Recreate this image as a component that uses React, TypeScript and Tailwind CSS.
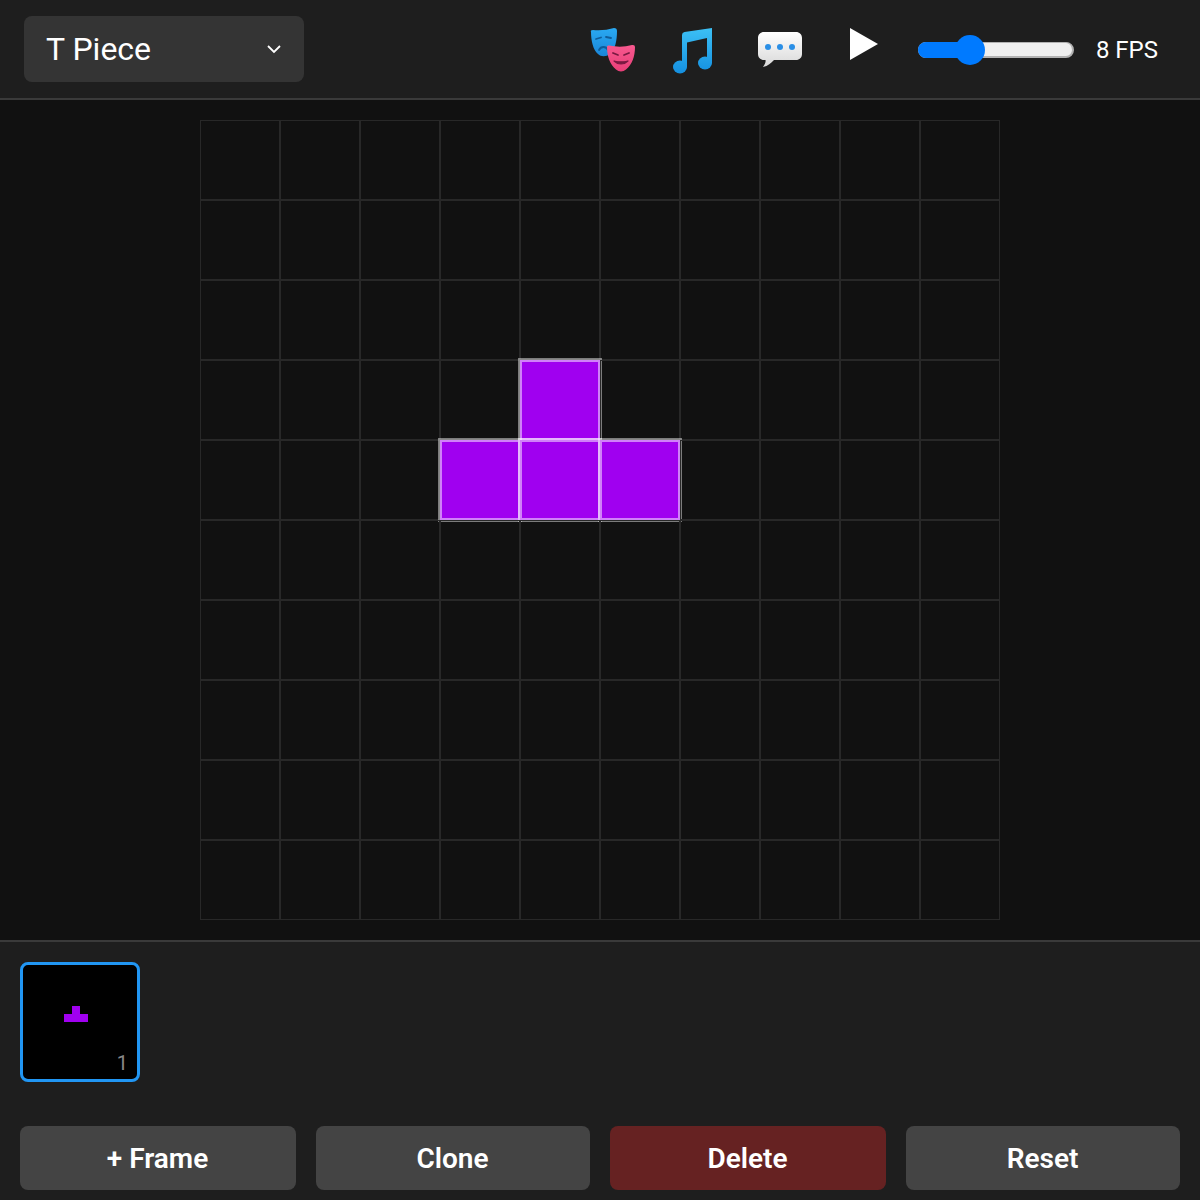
import React from 'react';

const SIZE = 10;
const T_PIECE = ['3,4', '4,3', '4,4', '4,5'];
const isFilled = (row: number, col: number) => T_PIECE.includes(`${row},${col}`);
const CELLS = Array.from({ length: SIZE * SIZE }, (_, i) => ({ row: Math.floor(i / SIZE), col: i % SIZE }));

function MasksIcon() {
  return (
    <svg width="48" height="48" viewBox="0 0 48 48">
      <defs>
        <linearGradient id="maskBlue" x1="0" y1="0" x2="0" y2="1">
          <stop offset="0" stopColor="#2aa9f2" />
          <stop offset="1" stopColor="#1a86d8" />
        </linearGradient>
        <linearGradient id="maskPink" x1="0" y1="0" x2="0" y2="1">
          <stop offset="0" stopColor="#f8598f" />
          <stop offset="1" stopColor="#e83f78" />
        </linearGradient>
      </defs>
      <path d="M3 6Q2 4 5 4Q16 5 26 2Q29 2 29 5C29 15 27 24 22 28C18 31 13 31 10 28C5 24 3 14 3 6Z" fill="url(#maskBlue)" />
      <path d="M8 13L13 11.500M18 11L23 12" stroke="#0f5c99" strokeWidth="1.8" strokeLinecap="round" />
      <path d="M11 24C13 20 18 20 20 24" fill="none" stroke="#0f5c99" strokeWidth="1.8" strokeLinecap="round" />
      <path d="M19 21Q19 19 21 19.500Q33 22 44 19Q47 18.500 47 21C47 30 44 39 38 43.500C35 46 31 46 28 43.500C22 39 19 30 19 21Z" fill="url(#maskPink)" />
      <path d="M25 27L30 29M41 27L36 29" stroke="#7a1a42" strokeWidth="1.8" strokeLinecap="round" />
      <path d="M26 35C30 39 36 39 40 35C36 36 30 36 26 35Z" fill="#7a1a42" stroke="#7a1a42" strokeWidth="1.2" strokeLinejoin="round" />
    </svg>
  );
}

function NoteIcon() {
  return (
    <svg width="44" height="48" viewBox="0 0 44 48">
      <defs>
        <linearGradient id="noteBlue" gradientUnits="userSpaceOnUse" x1="0" y1="2" x2="0" y2="47">
          <stop offset="0" stopColor="#3cc0f5" />
          <stop offset="1" stopColor="#1590e0" />
        </linearGradient>
      </defs>
      <path d="M10 9Q10 6.500 12.500 6L40 2V37H35V12L15 16.500V41H10Z" fill="url(#noteBlue)" />
      <ellipse cx="33" cy="37" rx="7" ry="6.500" fill="url(#noteBlue)" />
      <ellipse cx="8" cy="41" rx="7" ry="6.500" fill="url(#noteBlue)" />
    </svg>
  );
}

function BubbleIcon() {
  return (
    <svg width="46" height="38" viewBox="0 0 46 38">
      <defs>
        <linearGradient id="bubbleWhite" x1="0" y1="0" x2="0" y2="1">
          <stop offset="0" stopColor="#ffffff" />
          <stop offset="1" stopColor="#d8d8d8" />
        </linearGradient>
      </defs>
      <path
        d="M7 1H39C42.500 1 45 3.500 45 7V23C45 26.500 42.500 29 39 29H17C14 32 11 35 6 36C8 33 9 31 8.500 29H7C3.500 29 1 26.500 1 23V7C1 3.500 3.500 1 7 1Z"
        fill="url(#bubbleWhite)"
      />
      <circle cx="11" cy="16" r="3" fill="#2b8fe6" />
      <circle cx="23" cy="16" r="3" fill="#2b8fe6" />
      <circle cx="35" cy="16" r="3" fill="#2b8fe6" />
    </svg>
  );
}

function ChevronIcon() {
  return (
    <svg width="16" height="10" viewBox="0 0 16 10">
      <path d="M2 2L8 8L14 2" fill="none" stroke="#ffffff" strokeWidth="1.8" />
    </svg>
  );
}

function FpsSlider() {
  return (
    <div className="relative w-[156px] h-4">
      <div className="w-full h-full rounded-full bg-[#efefef] border border-[#b2b2b2] border-b-2 border-r-2" />
      <div className="absolute left-0 top-0 h-full w-[52px] rounded-l-full bg-[#007aff]" />
      <div className="absolute left-[37px] top-[-7px] w-[30px] h-[30px] rounded-full bg-[#007aff]" />
    </div>
  );
}

function Header() {
  return (
    <header className="h-[100px] shrink-0 flex items-center justify-between pl-6 pr-[42px] bg-[#1e1e1e] border-b-2 border-[#3a3a3a]">
      <div className="w-[280px] h-[66px] flex items-center justify-between pl-[22px] pr-[22px] rounded-lg bg-[#343434] text-[32px] text-white">
        <span>T Piece</span>
        <ChevronIcon />
      </div>
      <div className="flex items-center mt-[2px]">
        <div className="w-[48px] h-[48px] mr-[36px]"><MasksIcon /></div>
        <div className="w-[44px] h-[48px] mr-[41px]"><NoteIcon /></div>
        <div className="w-[46px] h-[38px] mr-[47px]"><BubbleIcon /></div>
        <div className="w-0 h-0 mb-[12px] mr-[40px] border-y-[16px] border-y-transparent border-l-[28px] border-l-white" />
        <FpsSlider />
        <span className="ml-[22px] text-2xl text-white">8 FPS</span>
      </div>
    </header>
  );
}

function Editor() {
  return (
    <main className="h-[840px] shrink-0 flex items-center justify-center bg-[#111111]">
      <div className="grid grid-cols-[repeat(10,80px)] grid-rows-[repeat(10,80px)]">
        {CELLS.map(({ row, col }) => (
          <div
            key={`${row}-${col}`}
            className={
              isFilled(row, col)
                ? 'bg-[#a000f0] border-2 border-white/50 shadow-[0_0_0_2px_rgba(255,255,255,0.45)]'
                : 'border border-[#282828]'
            }
          />
        ))}
      </div>
    </main>
  );
}

function FrameThumb() {
  return (
    <div className="relative w-[120px] h-[120px] flex items-center justify-center rounded-lg border-[3px] border-[#2196f3] bg-black">
      <div className="grid grid-cols-[repeat(10,8px)] grid-rows-[repeat(10,8px)]">
        {CELLS.map(({ row, col }) => (
          <div key={`${row}-${col}`} className={isFilled(row, col) ? 'bg-[#a000f0]' : ''} />
        ))}
      </div>
      <span className="absolute right-[9px] bottom-[4px] text-xl leading-6 text-[#888888]">1</span>
    </div>
  );
}

function Footer() {
  const btn = 'h-16 pt-[2px] pr-[1px] rounded-lg text-[28px] font-semibold text-white';
  return (
    <footer className="h-[260px] flex flex-col justify-between pt-5 pb-[10px] px-5 bg-[#1e1e1e] border-t-2 border-[#3a3a3a]">
      <FrameThumb />
      <div className="grid grid-cols-[276px_274px_276px_274px] gap-5">
        <button className={`${btn} bg-[#444444]`}>+ Frame</button>
        <button className={`${btn} bg-[#444444]`}>Clone</button>
        <button className={`${btn} bg-[#662222]`}>Delete</button>
        <button className={`${btn} bg-[#444444]`}>Reset</button>
      </div>
    </footer>
  );
}

export default function App() {
  return (
    <div className="w-[1200px] h-[1200px] flex flex-col overflow-hidden font-['Roboto',sans-serif]">
      <Header />
      <Editor />
      <Footer />
    </div>
  );
}
